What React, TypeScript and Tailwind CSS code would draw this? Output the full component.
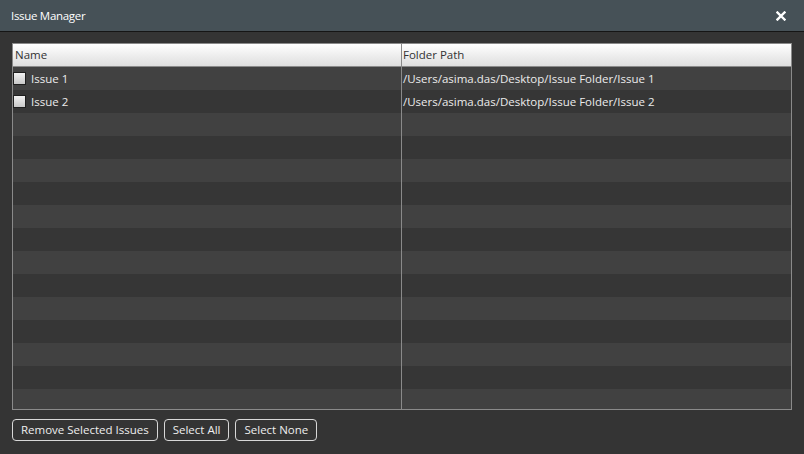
const issues = [
  { name: 'Issue 1', path: '/Users/asima.das/Desktop/Issue Folder/Issue 1' },
  { name: 'Issue 2', path: '/Users/asima.das/Desktop/Issue Folder/Issue 2' },
];

const ROW_COUNT = 15;

function Checkbox() {
  return (
    <span className="inline-block w-[13px] h-[13px] border border-[#1e1e1e] bg-gradient-to-b from-[#f2f2f2] to-[#c8c8c8] shrink-0" />
  );
}

export default function App() {
  const rows = Array.from({ length: ROW_COUNT }, (_, i) => issues[i] ?? null);

  return (
    <div
      className="w-[804px] h-[454px] bg-[#343434] flex flex-col overflow-hidden text-[11.5px]"
      style={{ fontFamily: '"Open Sans", "Noto Sans", sans-serif' }}
    >
      {/* Title bar */}
      <div className="h-[32px] shrink-0 bg-[#465157] border-b border-[#151515] flex items-center justify-between pl-[11px] pr-[18px]">
        <span className="text-white text-[11.5px] tracking-[-0.3px]">Issue Manager</span>
        <svg width="10" height="10" viewBox="0 0 10 10">
          <path d="M1.5 1.5 L8.5 8.5 M8.5 1.5 L1.5 8.5" stroke="#fff" strokeWidth="2.4" strokeLinecap="square" />
        </svg>
      </div>

      {/* Table */}
      <div className="mt-[11px] mx-[12px] h-[367px] border border-[#8a8a8a] flex flex-col overflow-hidden">
        <div className="h-[23px] shrink-0 flex bg-gradient-to-b from-white to-[#dedede] border-b border-[#8a8a8a] text-[#333]">
          <div className="w-[389px] border-r border-[#8a8a8a] flex items-center pl-[2px]">Name</div>
          <div className="flex-1 flex items-center pl-[1px]">Folder Path</div>
        </div>
        <div className="flex-1 flex flex-col">
          {rows.map((r, i) => (
            <div
              key={i}
              className={`h-[23px] shrink-0 flex text-[#ececec] ${i % 2 === 0 ? 'bg-[#414141]' : 'bg-[#363636]'}`}
            >
              <div className="w-[389px] border-r border-[#8a8a8a] flex items-center gap-[5px]">
                {r && (
                  <>
                    <Checkbox />
                    <span>{r.name}</span>
                  </>
                )}
              </div>
              <div className="flex-1 flex items-center pl-[1px]">{r?.path}</div>
            </div>
          ))}
        </div>
      </div>

      {/* Buttons */}
      <div className="flex gap-[6px] mt-[9px] ml-[12px]">
        {['Remove Selected Issues', 'Select All', 'Select None'].map((b) => (
          <button
            key={b}
            className="h-[22px] px-[8px] border border-[#d8d8d8] rounded-[4px] text-[#eeeeee] text-[11.5px] flex items-center"
          >
            {b}
          </button>
        ))}
      </div>
    </div>
  );
}
